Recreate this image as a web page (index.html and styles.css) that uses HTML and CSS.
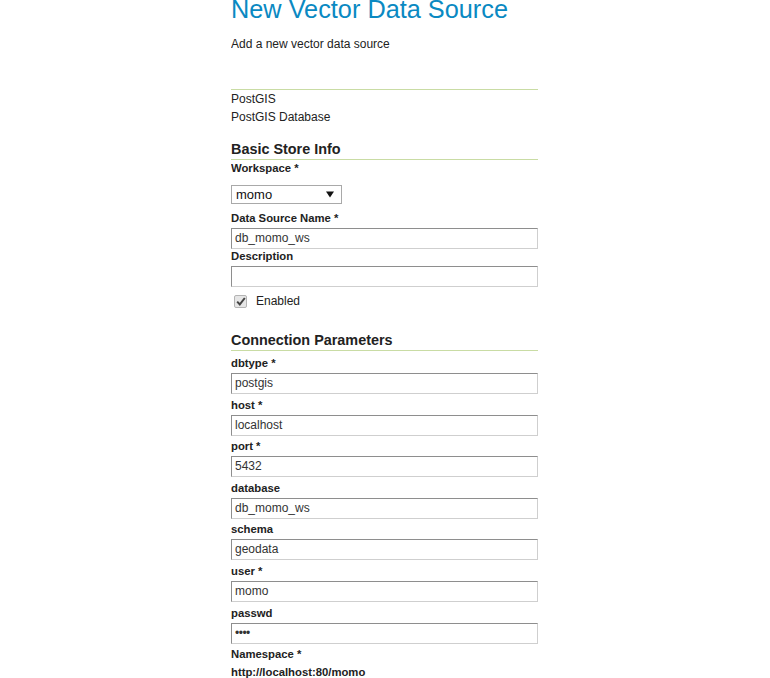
FILE: index.html
```html
<!DOCTYPE html>
<html>
<head>
<meta charset="utf-8">
<title>New Vector Data Source</title>
<link rel="stylesheet" href="styles.css">
</head>
<body>
<div class="page">
  <h1 class="title">New Vector Data Source</h1>
  <p class="subtitle">Add a new vector data source</p>
  <div class="store-type">
    <div class="line">PostGIS</div>
    <div class="line">PostGIS Database</div>
  </div>

  <h2 class="section section-basic">Basic Store Info</h2>
  <div class="basic">
    <label class="label label-ws">Workspace *</label>
    <div class="select">
      <span>momo</span>
      <svg class="arrow" width="8" height="7" viewBox="0 0 8 7"><path d="M0 0.5 H8 L4 6.5 Z" fill="#111"/></svg>
    </div>
    <label class="label label-dsn">Data Source Name *</label>
    <div class="input">db_momo_ws</div>
    <label class="label label-desc">Description</label>
    <div class="input"></div>
    <div class="check-row">
      <span class="checkbox">
        <svg width="10" height="9" viewBox="0 0 10 9"><path d="M1.2 4.6 L3.8 7.4 L8.8 1" fill="none" stroke="#444" stroke-width="2"/></svg>
      </span>
      <span class="check-label">Enabled</span>
    </div>
  </div>

  <h2 class="section section-conn">Connection Parameters</h2>
  <div class="conn">
    <div class="field"><label class="label">dbtype *</label><div class="input">postgis</div></div>
    <div class="field"><label class="label">host *</label><div class="input">localhost</div></div>
    <div class="field"><label class="label">port *</label><div class="input">5432</div></div>
    <div class="field"><label class="label">database</label><div class="input">db_momo_ws</div></div>
    <div class="field"><label class="label">schema</label><div class="input">geodata</div></div>
    <div class="field"><label class="label">user *</label><div class="input">momo</div></div>
    <div class="field"><label class="label">passwd</label><div class="input pw">&bull;&bull;&bull;&bull;</div></div>
    <div class="field"><label class="label">Namespace *</label><div class="value">http://localhost:80/momo</div></div>
  </div>
</div>
</body>
</html>
```

FILE: styles.css
```css
html, body {
  margin: 0;
  padding: 0;
  background: #ffffff;
}
body {
  font-family: "Liberation Sans", Arial, sans-serif;
  font-size: 12px;
  color: #222222;
}
.page {
  width: 307px;
  margin-left: calc(50% - 154px);
  overflow: hidden;
}
.title {
  margin: 0;
  font-size: 25.3px;
  line-height: 19px;
  font-weight: normal;
  color: #0a89c2;
}
.subtitle {
  margin: 16px 0 36px 0;
  line-height: 18px;
  color: #222222;
}
.store-type {
  border-top: 1px solid #c9dca4;
}
.line {
  line-height: 18px;
}
.section {
  margin: 15px 0 0 0;
  font-size: 14.4px;
  line-height: 17px;
  font-weight: bold;
  color: #222222;
  padding-bottom: 1px;
  border-bottom: 1px solid #c9dca4;
}
.section-conn {
  margin-top: 24px;
}
.label {
  display: block;
  font-size: 11.3px;
  font-weight: bold;
  line-height: 14px;
  color: #222222;
}
.label-ws {
  margin-top: 1px;
}
.select {
  margin-top: 10px;
  width: 111px;
  height: 19px;
  box-sizing: border-box;
  border: 1px solid #a9a9a9;
  background: #ffffff;
  display: flex;
  align-items: center;
  justify-content: space-between;
  padding: 0 7px 0 4px;
  font-size: 13px;
  color: #111111;
}
.arrow {
  display: block;
}
.label-dsn {
  margin-top: 7px;
}
.input {
  margin-top: 3px;
  height: 21px;
  box-sizing: border-box;
  border-style: solid;
  border-width: 1px;
  border-color: #8e8e8e #cfcfcf #cfcfcf #8e8e8e;
  padding: 0 3px;
  font-size: 12px;
  line-height: 19px;
  color: #333333;
  background: #ffffff;
}
.label-desc {
  margin-top: 0;
}
.check-row {
  display: flex;
  align-items: center;
  margin-top: 7px;
  padding-left: 3px;
  height: 14px;
}
.checkbox {
  width: 13px;
  height: 13px;
  box-sizing: border-box;
  border: 1px solid #b4b4b4;
  border-radius: 2px;
  background: #e6e6e6;
  display: flex;
  align-items: center;
  justify-content: center;
}
.check-label {
  margin-left: 9px;
  line-height: 14px;
}
.conn {
  padding-top: 5px;
}
.field {
  margin-bottom: 3.6px;
}
.pw {
  font-size: 12px;
  letter-spacing: -0.5px;
  color: #333333;
}
.value {
  margin-top: 3.6px;
  font-size: 11.3px;
  font-weight: bold;
  line-height: 14px;
}
```
